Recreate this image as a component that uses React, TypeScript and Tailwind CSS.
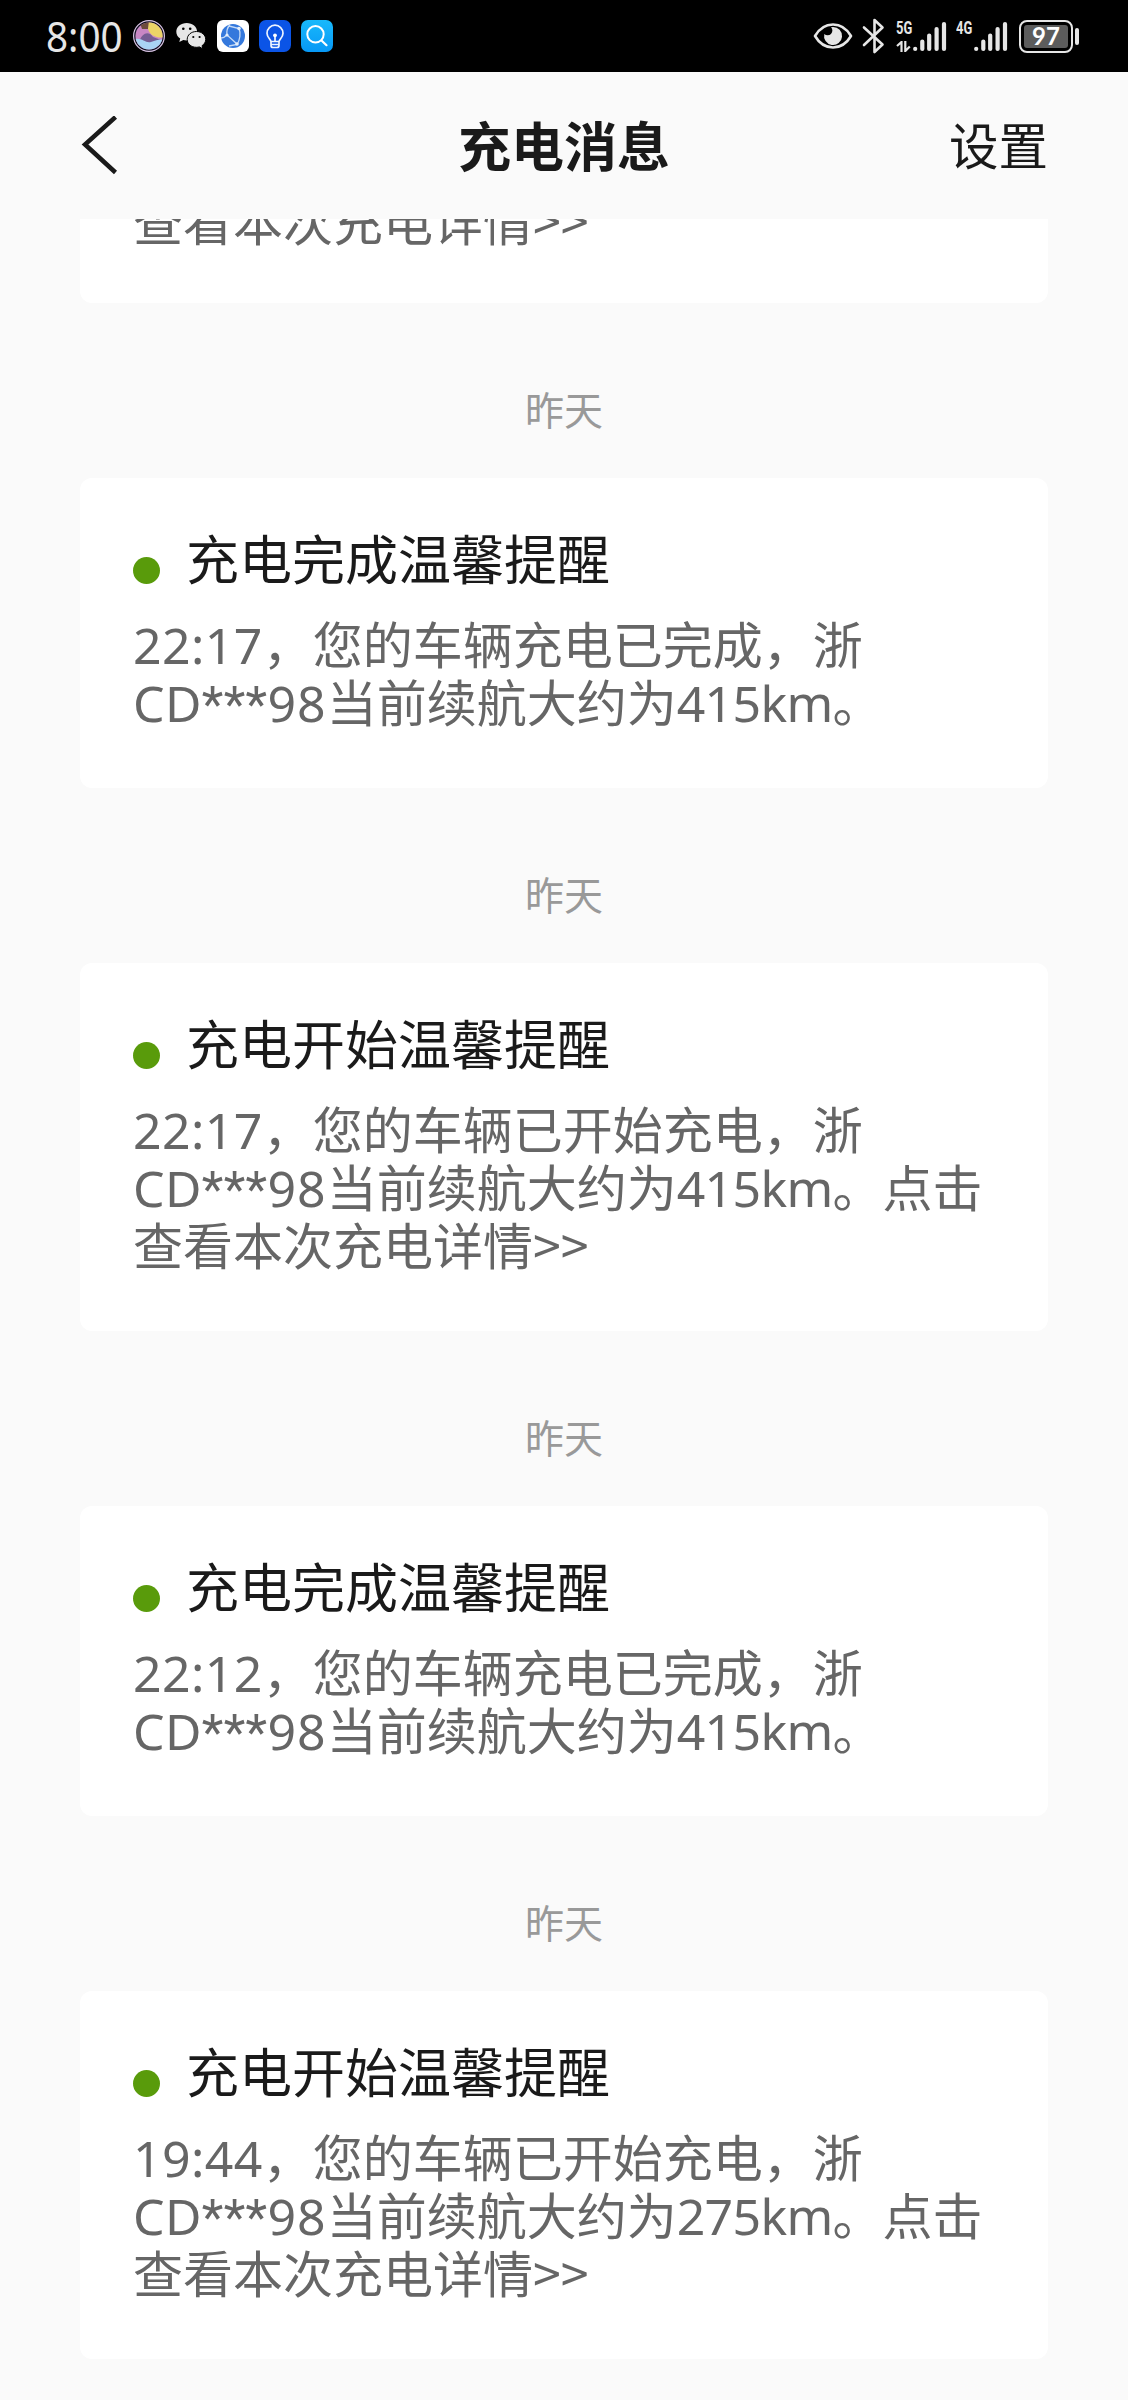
import type { ReactNode } from "react";

const CJK = "font-['Noto_Sans_CJK_SC',sans-serif]";

function Latin({ children, tracking = "" }: { children: ReactNode; tracking?: string }) {
  return <span className={`font-['Noto_Sans',sans-serif] ${tracking}`}>{children}</span>;
}

function Plate() {
  return (
    <>
      <Latin tracking="tracking-[0.3px]">CD</Latin>
      <span className="font-['Roboto',sans-serif] tracking-[0.4px]">***</span>
      <Latin tracking="tracking-[1px]">98</Latin>
    </>
  );
}

type Message = { time: string; kind: "done" | "start"; range: string };

const messages: Message[] = [
  { time: "22:17", kind: "done", range: "415km" },
  { time: "22:17", kind: "start", range: "415km" },
  { time: "22:12", kind: "done", range: "415km" },
  { time: "19:44", kind: "start", range: "275km" },
];

function MessageCard({ time, kind, range }: Message) {
  const started = kind === "start";
  return (
    <section>
      <div className="flex h-[174.500px] items-center justify-center pt-[39px] text-[39px] leading-[39px] text-[#999999]">
        <span className="-translate-y-[1px]">昨天</span>
      </div>
      <article className="rounded-[12px] bg-white px-[53px] pt-[49px] pb-[59.500px]">
        <div className="flex h-[60px] items-center">
          <span className="mt-[28px] size-[27px] shrink-0 rounded-full bg-[#599b0b]" />
          <h2 className="ml-[26px] text-[53px] leading-[60px] font-normal text-[#1a1a1a]">
            {started ? "充电开始温馨提醒" : "充电完成温馨提醒"}
          </h2>
        </div>
        <div className="mt-[26px] text-[50px] leading-[58px] whitespace-nowrap text-[#666666]">
          <p className="h-[58px]">
            <Latin tracking="tracking-[0.4px]">{time}</Latin>
            {started ? "，您的车辆已开始充电，浙" : "，您的车辆充电已完成，浙"}
          </p>
          <p className="h-[58px]">
            <Plate />
            当前续航大约为
            <Latin tracking="tracking-[-0.7px]">{range}</Latin>
            {started ? "。点击" : "。"}
          </p>
          {started && <p className="h-[58px]">查看本次充电详情&gt;&gt;</p>}
        </div>
      </article>
    </section>
  );
}

function SignalBars() {
  return (
    <svg width="34" height="32" viewBox="0 0 34 32" stroke="#e6e6e6" strokeWidth="4.2" strokeLinecap="round">
      <path d="M2.2 28.8v.2M9.3 21.5V29M16.2 15.5V29M23.6 9V29M31 4V29" />
    </svg>
  );
}

function StatusBar() {
  return (
    <div className="flex h-[72px] shrink-0 items-center bg-black pl-[46px] text-[#e6e6e6]">
      <div className="w-[87px] origin-left scale-x-[0.92] font-['Noto_Sans',sans-serif] text-[42px] leading-[72px]">8:00</div>
      <svg className="shrink-0" width="32" height="32" viewBox="0 0 32 32">
        <defs>
          <clipPath id="globe">
            <circle cx="16" cy="16" r="13.6" />
          </clipPath>
        </defs>
        <circle cx="16" cy="16" r="15.4" fill="#101020" stroke="#d9c4e4" strokeWidth="1.2" />
        <g clipPath="url(#globe)">
          <rect width="32" height="32" fill="#c887c4" />
          <path d="M6 0H18L15 9L9 9Z" fill="#6d4b3c" />
          <path d="M16 0H32V17C25 19 17 16 15 9Z" fill="#ecd467" />
          <path d="M7 20C9 14 15 10 20 17L28 20V24H8Z" fill="#765d94" />
          <path d="M0 20C8 16 12 24 18 22S26 19 32 20V32H0Z" fill="#a9d3f4" />
        </g>
      </svg>
      <svg className="ml-[11px] shrink-0" width="30" height="28" viewBox="0 0 30 28">
        <path d="M10.7 1C4.900 1 .3 4.900 .3 9.800c0 2.900 1.500 5.200 3.900 6.800L3.300 20l4-2c1.100.3 2.200.4 3.400.4 5.800 0 10.400-3.900 10.400-8.700S16.500 1 10.700 1Z" fill="#e6e6e6" />
        <path d="M20.500 9.500c-5.300 0-9.300 3.500-9.300 7.900s4 7.900 9.300 7.900c1 0 2-.2 2.900-.4l3.500 1.900-.9-3.100c2.300-1.500 3.700-3.700 3.700-6.300 0-4.400-4-7.900-9.200-7.900Z" fill="#e6e6e6" stroke="#000" strokeWidth="1" />
        <circle cx="7.300" cy="6.700" r="1.300" />
        <circle cx="14.200" cy="6.700" r="1.300" />
        <circle cx="17.300" cy="15" r="1.100" />
        <circle cx="23.600" cy="15" r="1.100" />
      </svg>
      <svg className="ml-[11px] shrink-0" width="32" height="32" viewBox="0 0 32 32" fill="none">
        <rect width="32" height="32" rx="6" fill="#fff" />
        <circle cx="16" cy="16" r="12" fill="#3478dc" />
        <path d="M13 4.500C10 8 9.500 12 10 15l10 9M10 15C8 17 6 18 4 18M12 6l10 2.500C24 13 23 20 20 24.500l-8 1.500" stroke="#c7dcf6" strokeWidth="1.300" />
        <circle cx="22" cy="8.500" r="1.800" fill="#e2edfb" />
        <circle cx="10" cy="15" r="1.600" fill="#e2edfb" />
        <circle cx="20" cy="24" r="1.800" fill="#e2edfb" />
      </svg>
      <svg className="ml-[10px] shrink-0" width="32" height="32" viewBox="0 0 32 32" fill="none">
        <rect width="32" height="32" rx="7" fill="#0b54e6" />
        <path d="M12 21.500C11.600 19 8 17.500 8 13.200a8 8 0 0 1 16 0c0 4.300-3.600 5.800-4 8.300ZM12 21.500v4q0 2 2 2h4q2 0 2-2v-4M12 24.500h8M16 15v6.500" stroke="#eef4ff" strokeWidth="1.700" strokeLinejoin="round" />
        <circle cx="16" cy="15.300" r="1.900" fill="#fff" />
      </svg>
      <svg className="ml-[10px] shrink-0" width="32" height="32" viewBox="0 0 32 32" fill="none">
        <defs>
          <linearGradient id="searchTile" x1="0" y1="0" x2="0" y2="1">
            <stop stopColor="#18b9fb" />
            <stop offset="1" stopColor="#0798f6" />
          </linearGradient>
        </defs>
        <rect width="32" height="32" rx="7" fill="url(#searchTile)" />
        <circle cx="14.500" cy="14.300" r="8.200" stroke="#fff" strokeWidth="2" />
        <path d="m20.500 20.500 5 4.700" stroke="#fff" strokeWidth="2.200" strokeLinecap="round" />
      </svg>

      <div className="ml-auto flex items-center pr-[49px]">
        <svg width="40" height="28" viewBox="0 0 40 28" fill="none">
          <path d="M2 14C11 -1.300 29 -1.300 38 14C29 29.300 11 29.300 2 14Z" stroke="#e6e6e6" strokeWidth="2.600" strokeLinejoin="round" />
          <path d="M20 5a9 9 0 1 1-8.700 6.900A4.500 4.500 0 1 0 18 5.200Z" fill="#e6e6e6" />
        </svg>
        <svg className="ml-[9px]" width="23" height="36" viewBox="0 0 23 36" fill="none" stroke="#e6e6e6" strokeWidth="2.600" strokeLinecap="round" strokeLinejoin="round">
          <path d="M2 9.500 20.500 26.500 12.500 34V2L20.500 9.500 2 27" />
        </svg>
        <div className="ml-[11px] flex h-[32px] w-[17px] flex-col justify-between">
          <span className="origin-left scale-x-[0.68] font-['Roboto',sans-serif] text-[19px] leading-[15px] font-bold">5G</span>
          <svg width="16" height="11" viewBox="0 0 16 11" fill="none" stroke="#e6e6e6" strokeWidth="2.200">
            <path d="M5.500 11V1L1 5M9.300 0v10l4.500-4.500" />
          </svg>
        </div>
        <SignalBars />
        <div className="ml-[9px] flex h-[32px] w-[17px] items-start">
          <span className="origin-left scale-x-[0.68] font-['Roboto',sans-serif] text-[19px] leading-[15px] font-bold">4G</span>
        </div>
        <div className="ml-[1px]">
          <SignalBars />
        </div>
        <div className="ml-[11px] flex h-[33px] w-[54px] items-center rounded-[8px] border-[2.500px] border-[#e6e6e6] p-[3px]">
          <div className="flex h-full w-full items-center justify-center rounded-[3px] bg-[#5c5c5c] font-['Lato',sans-serif] text-[24px] leading-none font-bold text-white">
            97
          </div>
        </div>
        <span className="ml-[2px] h-[17px] w-[4px] rounded-[2px] bg-[#e6e6e6]" />
      </div>
    </div>
  );
}

export default function App() {
  return (
    <div lang="zh-CN" className={`flex h-[2400px] w-[1128px] flex-col overflow-hidden bg-[#fafafa] ${CJK}`}>
      <StatusBar />
      <header className="grid h-[147px] shrink-0 grid-cols-3 items-center px-[80px] pb-[4px] text-[#1a1a1a]">
        <svg className="mt-[4px]" width="38" height="60" viewBox="0 0 38 60" fill="none" stroke="#1a1a1a" strokeWidth="4.500">
          <path d="M35.500 1 5 28.500 35.500 56.500" />
        </svg>
        <h1 className="text-center text-[53px] leading-[60px] font-bold">充电消息</h1>
        <span className="text-right text-[49.500px] leading-[60px]">设置</span>
      </header>
      <main className="min-h-0 flex-1 overflow-hidden px-[80px]">
        <div className="h-[84px] overflow-hidden rounded-b-[12px] bg-white px-[53px] text-[50px] text-[#666666]">
          <p className="-mt-[29px] leading-[58px]">查看本次充电详情&gt;&gt;</p>
        </div>
        {messages.map((m, i) => (
          <MessageCard key={i} {...m} />
        ))}
      </main>
    </div>
  );
}
